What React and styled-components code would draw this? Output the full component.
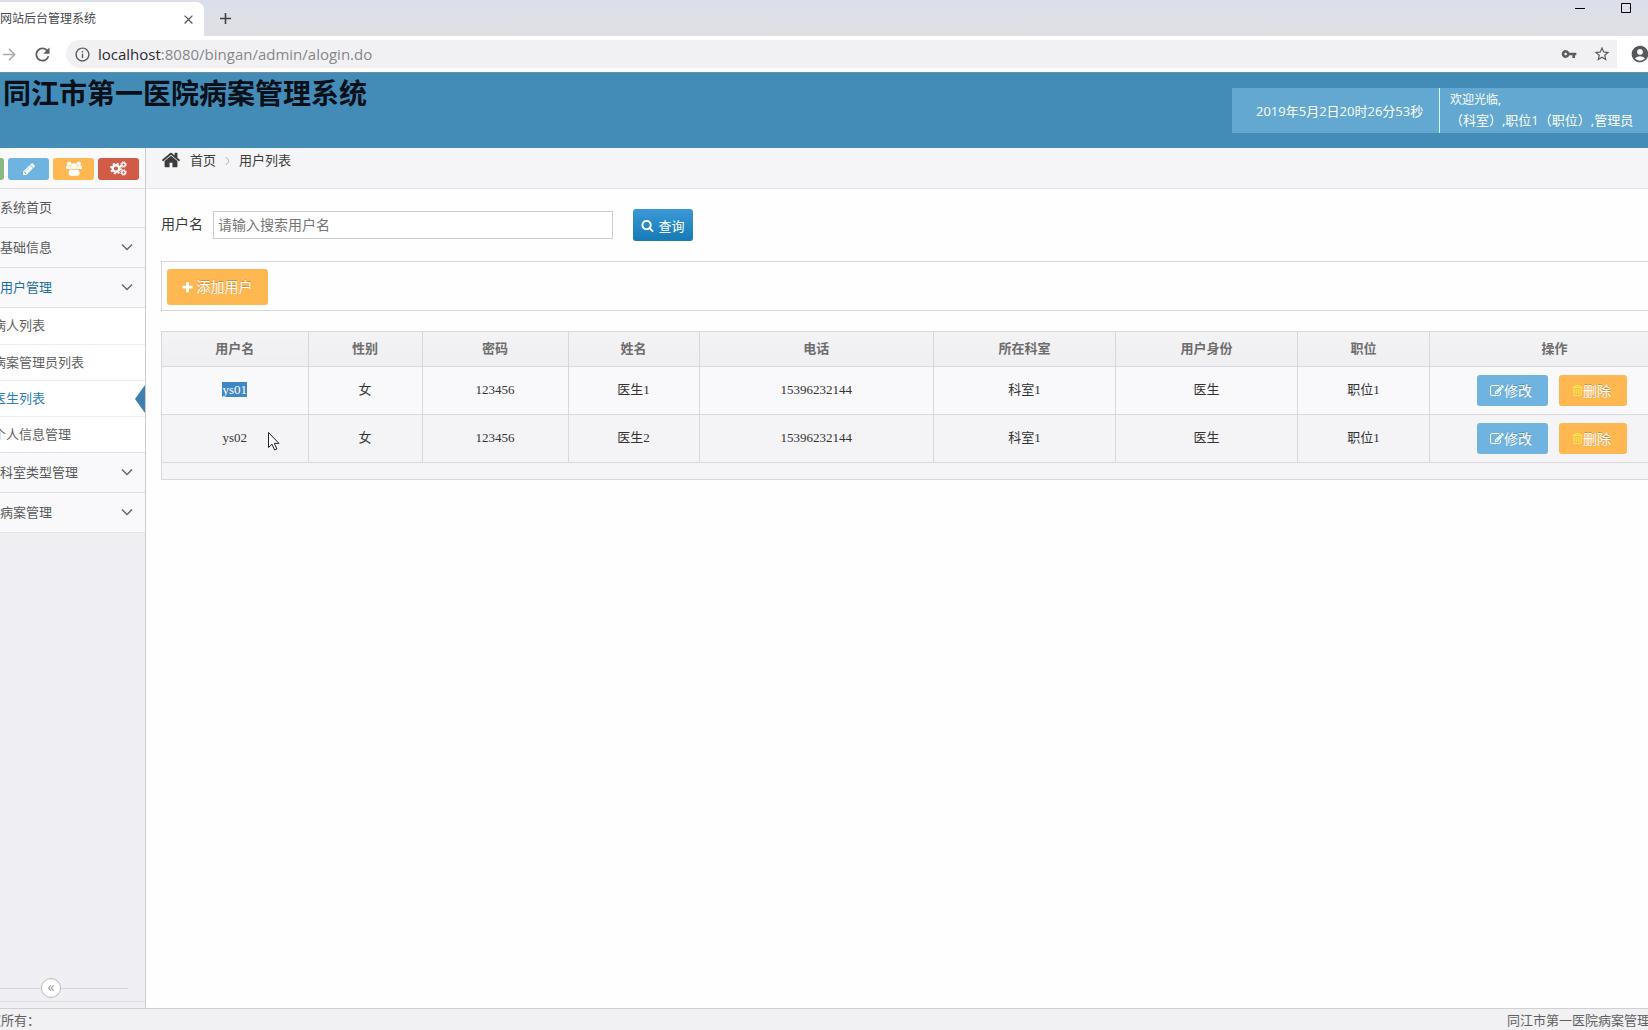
import React, { useState } from 'react';
import styled, { createGlobalStyle } from 'styled-components';
import { FaRegTrashAlt } from 'react-icons/fa';
import {
    MdArrowForward,
    MdRefresh,
    MdInfoOutline,
    MdVpnKey,
    MdStarBorder,
    MdAccountCircle,
    MdClose,
    MdAdd,
} from 'react-icons/md';

const uiFont = '"Open Sans", "Noto Sans CJK SC", sans-serif';

const GlobalStyle = createGlobalStyle`
    * {
        box-sizing: border-box;
    }
    body {
        margin: 0;
        overflow: hidden;
        background: #fff;
        color: #393939;
        font-family: ${uiFont};
        font-size: 13px;
        line-height: 20px;
    }
    button, input {
        font-family: inherit;
        font-size: inherit;
        line-height: inherit;
        margin: 0;
    }
    a {
        color: inherit;
        text-decoration: none;
    }
    svg {
        display: block;
        flex: none;
    }
`;

const Window = styled.div`
    display: flex;
    flex-direction: column;
    height: 100vh;
    overflow: hidden;
`;

/* browser chrome */

const TabStrip = styled.div`
    display: flex;
    justify-content: space-between;
    height: 36px;
    background: linear-gradient(#dcdfeb, #e0dfe4);
`;
const Tab = styled.div`
    display: flex;
    align-items: center;
    justify-content: space-between;
    width: 204px;
    margin-top: 2px;
    padding-right: 8px;
    border-radius: 0 8px 0 0;
    background: #fff;
    color: #45474a;
    font-size: 12px;
`;
const TabGroup = styled.div`
    display: flex;
    gap: 12px;
`;
const ChromeButton = styled.button`
    display: flex;
    align-items: center;
    justify-content: center;
    padding: 0;
    border: none;
    background: none;
    color: ${p => p.$color || '#5a5c60'};
`;
const WindowButtons = styled.div`
    display: flex;
    gap: 36px;
    height: 16px;
    padding-right: 17px;
`;
const AddressBar = styled.div`
    display: flex;
    align-items: center;
    gap: 13px;
    height: 37px;
    border-bottom: 1px solid #6f8f9a;
    background: #fff;
    padding-right: 32px;
`;
const Omnibox = styled.div`
    flex: 1;
    display: flex;
    align-items: center;
    gap: 16px;
    height: 28px;
    padding: 0 6px 0 8px;
    border-radius: 14px 0 0 14px;
    background: #f1f1f4;
    color: #5a5c60;
`;
const Url = styled.div`
    flex: 1;
    font-size: 15px;
    color: #85878b;
    margin-left: -9px;

    b {
        font-weight: 400;
        color: #2b2c2f;
    }
`;
const Avatar = styled.div`
    margin-right: -34px;
    color: #56585c;
`;

/* the admin page runs past the right edge of the window */

const Page = styled.div`
    flex: 1;
    display: flex;
    flex-direction: column;
    min-height: 0;
    width: calc(100% + 32px);
`;
const Header = styled.header`
    display: flex;
    justify-content: space-between;
    height: 75px;
    background: #448cb8;
`;
const Brand = styled.h1`
    margin: 0;
    padding: 5px 0 0 3px;
    font-family: "Noto Sans CJK SC", sans-serif;
    font-size: 28px;
    line-height: 28px;
    font-weight: 700;
    color: #071019;
`;
const UserBar = styled.div`
    display: flex;
    height: 45px;
    margin-top: 15px;
    background: #62a8d1;
    color: #fff;
`;
const Clock = styled.div`
    display: flex;
    align-items: center;
    width: 208px;
    padding-left: 24px;
    border-right: 1px solid #d5fbff;
    white-space: nowrap;
`;
const Welcome = styled.div`
    width: 240px;
    padding: 1px 0 0 10px;
    line-height: 21px;
    white-space: nowrap;

    small {
        display: block;
        font-size: 12px;
    }
`;

const Columns = styled.div`
    flex: 1;
    display: flex;
    min-height: 0;
`;
const Sidebar = styled.aside`
    display: flex;
    flex-direction: column;
    width: 146px;
    border-right: 1px solid #ccc;
    background: #efeef2;
    overflow: hidden;
`;
const Shortcuts = styled.div`
    display: flex;
    align-items: center;
    gap: 4px;
    height: 40px;
    padding-top: 1px;
    background: #fafafa;

    &::before {
        content: '';
        width: 4px;
        height: 22px;
        border-radius: 0 3px 3px 0;
        background: #87b87f;
    }
`;
const Shortcut = styled.button`
    display: flex;
    align-items: center;
    justify-content: center;
    width: 41px;
    height: 22px;
    padding: 0;
    border: none;
    border-radius: 3px;
    background: ${p => p.$bg};
    color: #fff;
`;
const Menu = styled.nav`
    border-bottom: 1px solid #e5e5e5;
`;
const MenuItem = styled.a`
    display: flex;
    align-items: center;
    justify-content: space-between;
    height: ${p => (p.$first ? 39 : 40)}px;
    padding: 0 12px 2px 0;
    border-top: 1px solid #dedde0;
    background: #f9f8fb;
    color: ${p => (p.$active ? '#1b6f9f' : '#585858')};
`;
const SubItem = styled.a`
    display: flex;
    align-items: center;
    justify-content: space-between;
    height: ${p => (p.$first ? 37 : 36)}px;
    border-top: 1px solid ${p => (p.$first ? '#dedde0' : '#ececef')};
    background: #fff;
    color: ${p => (p.$active ? '#2b7dbc' : '#616161')};

    span {
        margin-left: -7px;
        padding-bottom: 2px;
    }
`;
const ActiveMark = styled.i`
    border: solid transparent;
    border-width: 14px 10px 14px 0;
    border-right-color: #3f7fb0;
`;
const Collapse = styled.div`
    display: flex;
    align-items: center;
    height: 27px;
    margin: auto 0 6px;
    padding-right: 17px;
    border-bottom: 1px solid #dddde0;

    &::before,
    &::after {
        content: '';
        height: 1px;
        background: #d4d4d7;
    }
    &::before {
        width: 41px;
    }
    &::after {
        flex: 1;
    }
`;
const CollapseButton = styled.button`
    width: 20px;
    height: 20px;
    padding: 0 0 2px;
    border: 1px solid #bbb;
    border-radius: 50%;
    background: #fff;
    color: #999;
    font-size: 14px;
    line-height: 16px;
`;

const Main = styled.main`
    flex: 1;
    min-width: 0;
    background: #fefefe;
`;
const Breadcrumbs = styled.div`
    display: flex;
    gap: 9px;
    height: 41px;
    padding: 2px 0 0 15px;
    border-bottom: 1px solid #e5e5e5;
    background: #f5f4f7;
    color: #3c3c3c;
`;
const Content = styled.div`
    padding: 20px 0 0 15px;
`;
const SearchForm = styled.form`
    display: flex;
    align-items: center;
    gap: 20px;
    height: 32px;
    margin-bottom: 20px;

    label {
        margin-right: -10px;
        padding-bottom: 2px;
        font-size: 14px;
    }
`;
const SearchInput = styled.input`
    width: 400px;
    height: 28px;
    padding: 0 4px 2px;
    border: 1px solid #ccccd0;
    background: #fff;
    color: #393939;
    font-size: 14px;

    &::placeholder {
        color: #757575;
    }
`;
const SearchButton = styled.button`
    display: flex;
    align-items: center;
    justify-content: center;
    gap: 4px;
    width: 60px;
    height: 32px;
    padding: 1px 0 0;
    border: none;
    border-radius: 3px;
    background: linear-gradient(#3b98d6, #157ab5);
    color: #fff;
`;
const Toolbar = styled.div`
    height: 50px;
    margin-bottom: 20px;
    padding: 7px 5px;
    border: 1px solid #d8d8dc;
`;
const ActionButton = styled.button`
    display: flex;
    align-items: center;
    justify-content: center;
    gap: ${p => (p.$large ? 3 : 0)}px;
    width: ${p => p.$width}px;
    height: ${p => (p.$large ? 36 : 31)}px;
    padding: 0 2px 0 0;
    border: none;
    border-radius: 3px;
    background: ${p => p.$bg};
    color: #fff;
    font-size: 14px;
    text-shadow: 0 -1px 0 rgba(0, 0, 0, 0.2);
`;
const TableWrap = styled.div`
    padding-bottom: 16px;
    border-bottom: 1px solid #d8d8dc;
    border-left: 1px solid #d8d8dc;
    background: #f5f4f7;
`;
const Table = styled.table`
    width: 100%;
    table-layout: fixed;
    border-collapse: collapse;

    th,
    td {
        padding: 0;
        border: 1px solid #d8d8dc;
        border-left-width: 0;
        text-align: center;
    }
    th {
        height: 35px;
        padding-bottom: 2px;
        background: linear-gradient(#f3f2f4, #efeef1);
        color: #6d6d6d;
        font-weight: 700;
    }
    td {
        height: 48px;
        padding-bottom: 1px;
        background: #f9f8fb;
        color: #333;
        font-family: "Liberation Serif", "Noto Sans CJK SC", serif;
        line-height: 16px;
    }
    tr:nth-child(even) td {
        background: #f4f4f6;
    }
`;
const Col = styled.col`
    width: ${p => (p.$width ? `${p.$width}px` : 'auto')};
`;
const Actions = styled.div`
    display: flex;
    justify-content: center;
    gap: 11px;
    padding: 1px 6px 0 0;
    font-family: ${uiFont};
`;
const Selected = styled.span`
    background: #4087c7;
    color: #fff;
`;
const Footer = styled.footer`
    display: flex;
    justify-content: space-between;
    height: 22px;
    padding: 1px 4px 0 0;
    border-top: 1px solid #d0d0d3;
    background: #f1f0f3;
    color: #606060;
    white-space: nowrap;

    span:first-child {
        margin-left: -12px;
    }
`;
const Pointer = styled.svg`
    position: absolute;
    left: 267px;
    top: 431px;
    pointer-events: none;
`;

const icons = {
    home:
        'M1472 992v480q0 26-19 45t-45 19h-384v-384h-256v384h-384q-26 0-45-19t-19-45v-480q0-1 .5-3t.5-3l575-474 575 474q1 2 1 6zm223-69l-62 74q-8 9-21 11h-3q-13 0-21-7l-692-577-692 577q-12 8-24 7-13-2-21-11l-62-74q-8-10-7-23.5t11-21.5l719-599q32-26 76-26t76 26l244 204v-195q0-14 9-23t23-9h192q14 0 23 9t9 23v408l219 182q10 8 11 21.5t-7 23.5z',
    pencil:
        'M491 1536l91-91-235-235-91 91v107h128v128h107zm523-928q0-22-22-22-10 0-17 7l-542 542q-7 7-7 17 0 22 22 22 10 0 17-7l542-542q7-7 7-17zm-54-192l416 416-832 832h-416v-416zm683 96q0 53-37 90l-166 166-416-416 166-165q36-38 90-38 53 0 91 38l235 234q37 39 37 91z',
    search:
        'M1216 832q0-185-131.5-316.5t-316.5-131.5-316.5 131.5-131.5 316.5 131.5 316.5 316.5 131.5 316.5-131.5 131.5-316.5zm512 832q0 52-38 90t-90 38q-54 0-90-38l-343-342q-179 124-399 124-143 0-273.5-55.5t-225-150-150-225-55.5-273.5 55.5-273.5 150-225 225-150 273.5-55.5 273.5 55.5 225 150 150 225 55.5 273.5q0 220-124 399l343 343q37 37 37 90z',
    plus:
        'M1600 736v192q0 40-28 68t-68 28h-416v416q0 40-28 68t-68 28h-192q-40 0-68-28t-28-68v-416h-416q-40 0-68-28t-28-68v-192q0-40 28-68t68-28h416v-416q0-40 28-68t68-28h192q40 0 68 28t28 68v416h416q40 0 68 28t28 68z',
    edit:
        'M888 1184l116-116-152-152-116 116v56h96v96h56zm440-720q-16-16-33 1l-350 350q-17 17-1 33t33-1l350-350q17-17 1-33zm80 594v190q0 119-84.5 203.5t-203.5 84.5h-832q-119 0-203.5-84.5t-84.5-203.5v-832q0-119 84.5-203.5t203.5-84.5h832q63 0 117 25 15 7 18 23 3 17-9 29l-49 49q-14 14-32 8-23-6-45-6h-832q-66 0-113 47t-47 113v832q0 66 47 113t113 47h832q66 0 113-47t47-113v-126q0-13 9-22l64-64q15-15 35-7t20 29zm-96-738l288 288-672 672h-288v-288zm444 132l-92 92-288-288 92-92q28-28 68-28t68 28l152 152q28 28 28 68t-28 68z',
};

const Icon = ({ name, size = 14 }) => (
    <svg width={size} height={size} viewBox="0 0 1792 1792" fill="currentColor">
        <path d={icons[name]} />
    </svg>
);

const Chevron = () => (
    <svg width="12" height="8" viewBox="0 0 12 8" fill="none" stroke="#666" strokeWidth="1.5">
        <path d="M1 1.5l5 5 5-5" />
    </svg>
);

const GroupIcon = () => (
    <svg width="16" height="15" viewBox="0 0 16 15" fill="currentColor">
        <circle cx="3.2" cy="2.6" r="2.2" />
        <circle cx="12.8" cy="2.6" r="2.2" />
        <circle cx="8" cy="5.2" r="3" />
        <path d="M0 8V6.5Q0 4.6 1.2 4.6q2 1.2 3.4.4.1 2 1.2 3.1H4.2zM16 8V6.5q0-1.9-1.2-1.9-2 1.2-3.4.4-.1 2-1.2 3.1h1.6zM2.5 13q0-4.5 2.9-4.8Q8 10 10.6 8.2q2.9.3 2.9 4.8 0 1.8-1.9 1.8H4.4Q2.5 14.800 2.500 13z" />
    </svg>
);

const CogsIcon = () => (
    <svg width="17" height="15" viewBox="0 0 17 15" fill="none" stroke="currentColor">
        <circle cx="6" cy="7.5" r="3.3" strokeWidth="2.4" />
        <circle cx="6" cy="7.5" r="5" strokeWidth="1.8" strokeDasharray="2 1.93" />
        <circle cx="13.5" cy="3.6" r="1.8" strokeWidth="1.4" />
        <circle cx="13.5" cy="3.6" r="2.8" strokeWidth="1" strokeDasharray="1.2 1" />
        <circle cx="13.5" cy="11.4" r="1.8" strokeWidth="1.4" />
        <circle cx="13.5" cy="11.4" r="2.8" strokeWidth="1" strokeDasharray="1.2 1" />
    </svg>
);

const columns = [
    ['用户名', 146],
    ['性别', 114],
    ['密码', 146],
    ['姓名', 131],
    ['电话'],
    ['所在科室', 182],
    ['用户身份', 182],
    ['职位', 132],
    ['操作', 250],
];

const users = [
    ['ys01', '女', '123456', '医生1', '15396232144', '科室1', '医生', '职位1'],
    ['ys02', '女', '123456', '医生2', '15396232144', '科室1', '医生', '职位1'],
];

const subMenu = ['病人列表', '病案管理员列表', '医生列表', '个人信息管理'];

const Chrome = () => (
    <>
        <TabStrip>
            <TabGroup>
                <Tab>
                    网站后台管理系统
                    <ChromeButton aria-label="关闭标签页">
                        <MdClose size={15} />
                    </ChromeButton>
                </Tab>
                <ChromeButton aria-label="新标签页" $color="#3f4044">
                    <MdAdd size={19} />
                </ChromeButton>
            </TabGroup>
            <WindowButtons>
                <ChromeButton aria-label="最小化" $color="#000">
                    <svg width="10" height="10" stroke="currentColor">
                        <path d="M0 5.5h10" />
                    </svg>
                </ChromeButton>
                <ChromeButton aria-label="最大化" $color="#000">
                    <svg width="10" height="10" fill="none" stroke="currentColor">
                        <path d="M.5.5h9v9h-9z" />
                    </svg>
                </ChromeButton>
            </WindowButtons>
        </TabStrip>
        <AddressBar>
            <ChromeButton aria-label="前进" $color="#a9abaf">
                <MdArrowForward size={19} />
            </ChromeButton>
            <ChromeButton aria-label="刷新">
                <MdRefresh size={21} />
            </ChromeButton>
            <Omnibox>
                <MdInfoOutline size={17} />
                <Url>
                    <b>localhost</b>:8080/bingan/admin/alogin.do
                </Url>
                <MdVpnKey size={16} />
                <MdStarBorder size={18} />
            </Omnibox>
            <Avatar>
                <MdAccountCircle size={20} />
            </Avatar>
        </AddressBar>
    </>
);

const SideMenu = () => (
    <Sidebar>
        <Shortcuts>
            <Shortcut $bg="#6fb3e0" aria-label="编辑">
                <Icon name="pencil" />
            </Shortcut>
            <Shortcut $bg="#ffb752" aria-label="用户">
                <GroupIcon />
            </Shortcut>
            <Shortcut $bg="#d15b47" aria-label="设置">
                <CogsIcon />
            </Shortcut>
        </Shortcuts>
        <Menu>
            <MenuItem href="#" $first>
                系统首页
            </MenuItem>
            <MenuItem href="#">
                基础信息
                <Chevron />
            </MenuItem>
            <MenuItem href="#" $active>
                用户管理
                <Chevron />
            </MenuItem>
            {subMenu.map((label, i) => (
                <SubItem href="#" key={label} $first={i === 0} $active={label === '医生列表'}>
                    <span>{label}</span>
                    {label === '医生列表' && <ActiveMark />}
                </SubItem>
            ))}
            <MenuItem href="#">
                科室类型管理
                <Chevron />
            </MenuItem>
            <MenuItem href="#">
                病案管理
                <Chevron />
            </MenuItem>
        </Menu>
        <Collapse>
            <CollapseButton aria-label="收起菜单">«</CollapseButton>
        </Collapse>
    </Sidebar>
);

const UserTable = () => (
    <TableWrap>
        <Table>
            <colgroup>
                {columns.map(([label, width]) => (
                    <Col key={label} $width={width} />
                ))}
            </colgroup>
            <thead>
                <tr>
                    {columns.map(([label]) => (
                        <th key={label}>{label}</th>
                    ))}
                </tr>
            </thead>
            <tbody>
                {users.map((row, r) => (
                    <tr key={row[0]}>
                        {row.map((value, i) => (
                            <td key={i}>
                                {r === 0 && i === 0 ? <Selected>{value}</Selected> : value}
                            </td>
                        ))}
                        <td>
                            <Actions>
                                <ActionButton $bg="#6fb3e0" $width={71}>
                                    <Icon name="edit" />
                                    修改
                                </ActionButton>
                                <ActionButton $bg="#ffb752" $width={68}>
                                    <FaRegTrashAlt size={11} color="#fff04a" />
                                    删除
                                </ActionButton>
                            </Actions>
                        </td>
                    </tr>
                ))}
            </tbody>
        </Table>
    </TableWrap>
);

const App = () => {
    const [query, setQuery] = useState('');

    return (
        <Window>
            <GlobalStyle />
            <Chrome />
            <Page>
                <Header>
                    <Brand>同江市第一医院病案管理系统</Brand>
                    <UserBar>
                        <Clock>2019年5月2日20时26分53秒</Clock>
                        <Welcome>
                            <small>欢迎光临,</small>
                            （科室）,职位1（职位）,管理员
                        </Welcome>
                    </UserBar>
                </Header>
                <Columns>
                    <SideMenu />
                    <Main>
                        <Breadcrumbs>
                            <Icon name="home" size={20} />
                            <a href="#">首页</a>
                            <svg width="5" height="20" fill="none" stroke="#b2b6bf">
                                <path d="M1 7l3 4-3 4" />
                            </svg>
                            <span>用户列表</span>
                        </Breadcrumbs>
                        <Content>
                            <SearchForm onSubmit={e => e.preventDefault()}>
                                <label htmlFor="username">用户名</label>
                                <SearchInput
                                    id="username"
                                    type="text"
                                    placeholder="请输入搜索用户名"
                                    value={query}
                                    onChange={e => setQuery(e.target.value)}
                                />
                                <SearchButton type="submit">
                                    <Icon name="search" size={13} />
                                    查询
                                </SearchButton>
                            </SearchForm>
                            <Toolbar>
                                <ActionButton $bg="#ffb752" $width={101} $large>
                                    <Icon name="plus" size={13} />
                                    添加用户
                                </ActionButton>
                            </Toolbar>
                            <UserTable />
                        </Content>
                    </Main>
                </Columns>
                <Footer>
                    <span>权所有：</span>
                    <span>同江市第一医院病案管理系统</span>
                </Footer>
            </Page>
            <Pointer width="14" height="21" viewBox="0 0 14 21" fill="#fff" stroke="#222">
                <path d="M1.5 1.5v15l3.5-3.3 2.6 5.8 2.3-1-2.6-5.6h4.7z" />
            </Pointer>
        </Window>
    );
};

export default App;
